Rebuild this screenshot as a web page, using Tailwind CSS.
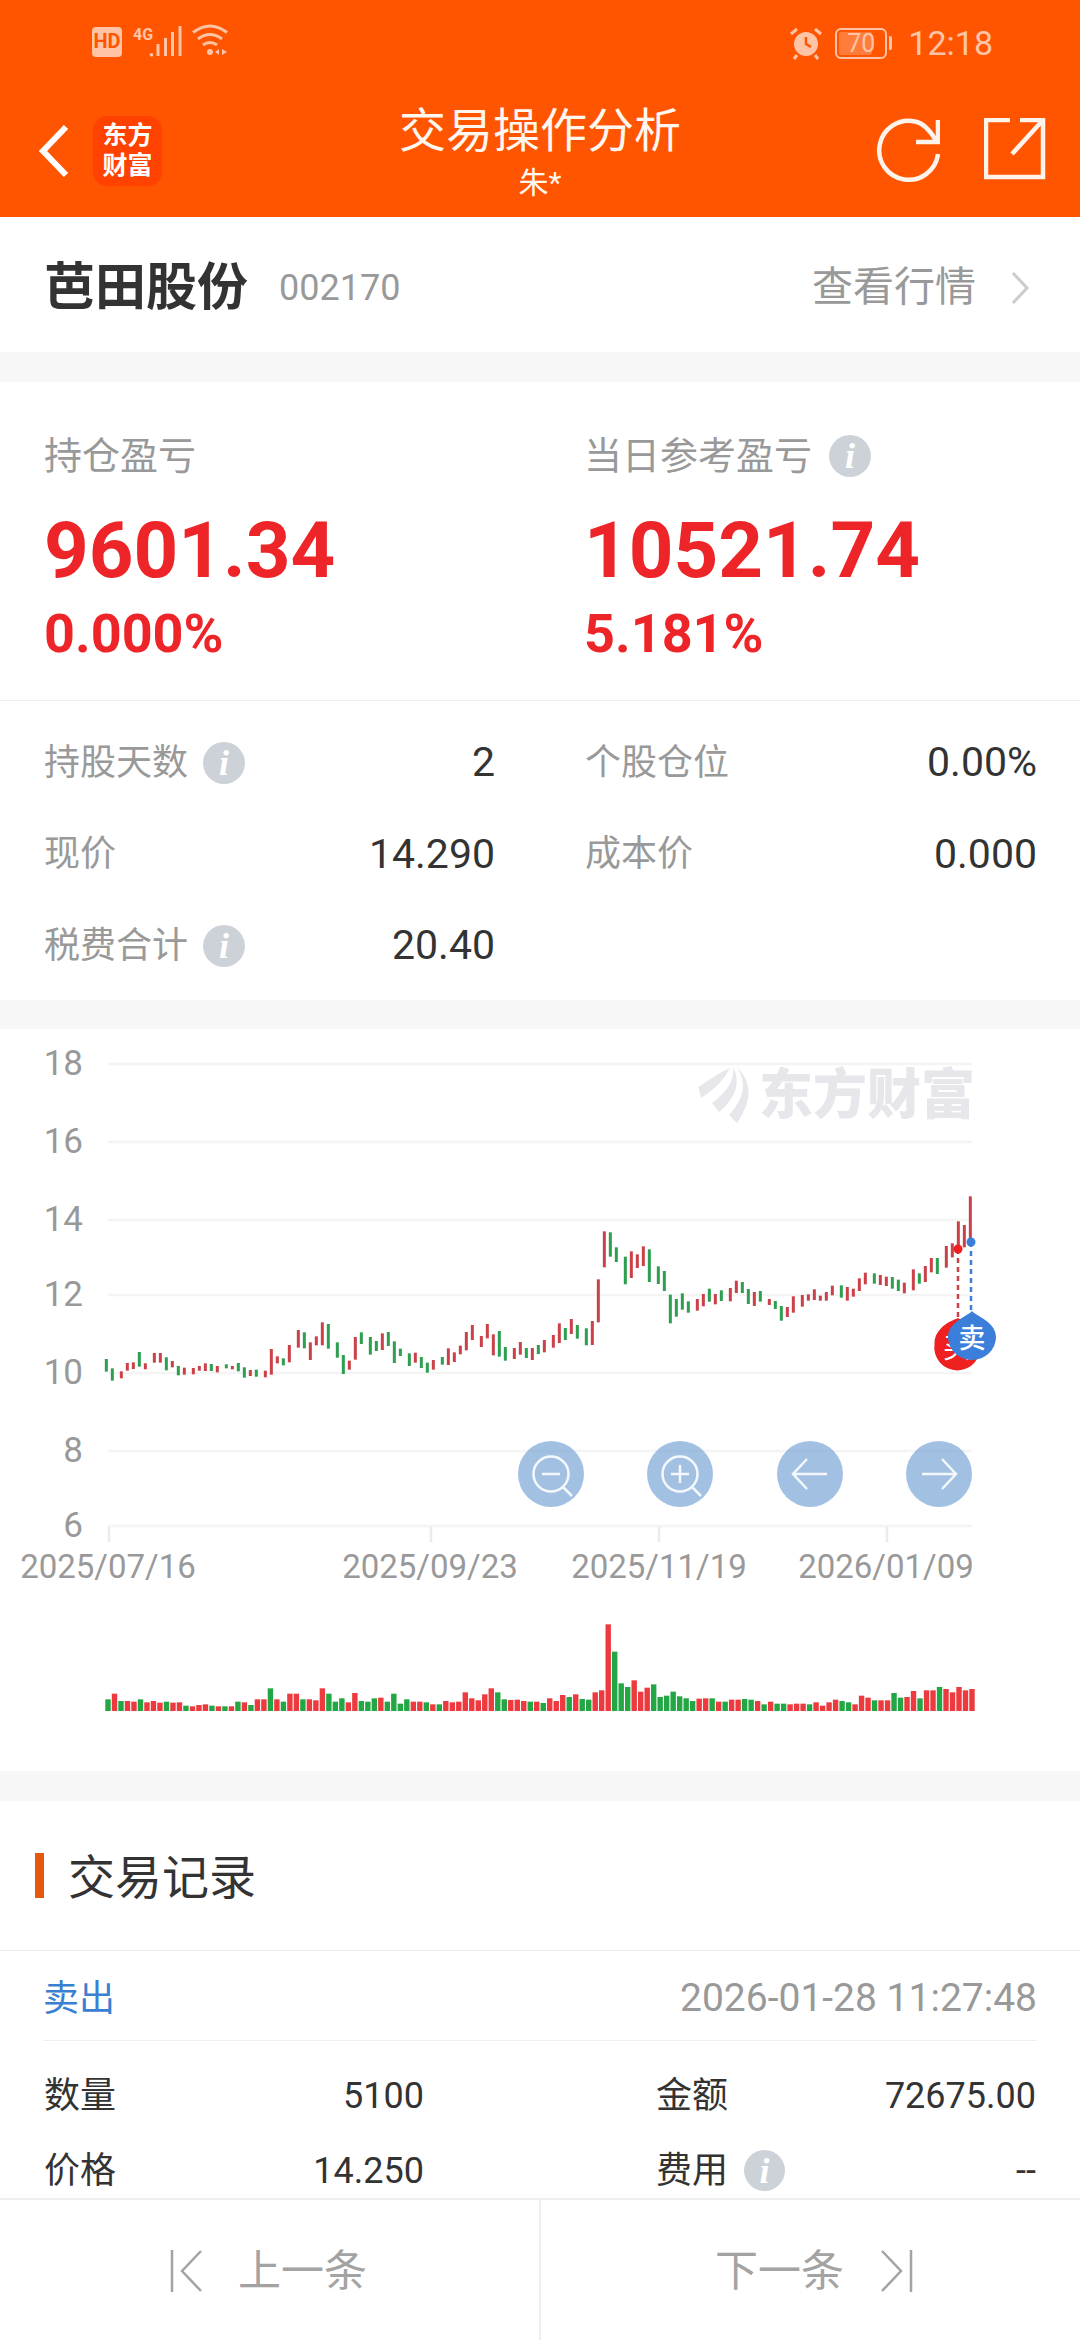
<!DOCTYPE html>
<html lang="zh-CN">
<head>
    <meta charset="UTF-8">
    <meta name="viewport" content="width=device-width, initial-scale=1.0">
    <title>交易操作分析</title>
    <script src="https://cdn.jsdelivr.net/npm/@tailwindcss/browser@4"></script>
</head>
<body class="[font-family:Roboto,'Noto_Sans_CJK_SC',sans-serif]">
<div class="w-[1080px] h-[2340px] flex flex-col overflow-hidden bg-[#f7f7f7] text-[#333]">

    <!-- header -->
    <header class="h-[217px] shrink-0 bg-[#ff5500] flex flex-col">
        <div class="h-[86px] flex items-center justify-between pl-[92px] pr-[87px] text-[#ffc4a6]">
            <svg width="140" height="40" viewBox="92 24 140 40" fill="none">
                <rect x="92" y="28" width="30" height="30" rx="4" fill="#ffc4a6"/>
                <path d="M151.5 54a1.8 1.8 0 1 0 .01 0ZM156.5 45h3v12h-3ZM164 39h3v18h-3ZM171 33h3v24h-3ZM178.500 27h3v30h-3Z" fill="#ffc4a6"/>
                <path d="M193 33.500q17-13 34 0M198 40q12-9 24 0M203 46q7-5 14 0" stroke="#ffc4a6" stroke-width="3"/>
                <circle cx="210" cy="53" r="3" fill="#ffc4a6"/>
                <path d="M219 50v6l-4-3ZM222 50v6l5-3Z" fill="#ffc4a6"/>
                <text x="107" y="49" text-anchor="middle" font-size="20" font-weight="700" fill="#ff5500">HD</text>
                <text x="133" y="41" font-size="16" font-weight="700" fill="#ffc4a6">4G</text>
            </svg>
            <div class="flex items-center">
                <svg width="36" height="36" viewBox="0 0 36 36" fill="none" class="mr-[11px]">
                    <circle cx="18" cy="19" r="12" fill="#ffc4a6"/>
                    <path d="M18 12v7l5 3" stroke="#ff5500" stroke-width="2.500"/>
                    <path d="M3 9l6-5M33 9l-6-5M9 30l-3 4M27 30l3 4" stroke="#ffc4a6" stroke-width="3"/>
                </svg>
                <div class="relative w-[52px] h-[31px] border-[2px] border-[#ffc4a6] rounded-[6px] flex items-center justify-center text-[25px] leading-none overflow-hidden">
                    <div class="absolute left-[2px] top-[2px] bottom-[2px] w-[33px] bg-[#ffc4a6]/35 rounded-[2px]"></div>
                    <span class="relative">70</span>
                </div>
                <div class="w-[3px] h-[14px] ml-[2px] bg-[#ffc4a6] rounded-r-[2px]"></div>
                <span class="ml-[16px] text-[34px] leading-none">12:18</span>
            </div>
        </div>
        <div class="flex-1 grid grid-cols-[1fr_auto_1fr] items-start">
            <div class="flex items-center pl-[38px] pt-[30px]">
                <svg width="34" height="54" viewBox="0 0 34 54" fill="none">
                    <path d="M28 3 5 27l23 24" stroke="#fff" stroke-width="6"/>
                </svg>
                <div class="ml-[21px] w-[69px] h-[70px] rounded-[14px] bg-[#ff4200] flex flex-col items-center justify-center text-white font-bold text-[25px] leading-[30px]">
                    <span>东方</span>
                    <span>财富</span>
                </div>
            </div>
            <div class="flex flex-col items-center text-white">
                <div class="text-[47px] leading-[62px] pt-[14px] text-[#fff7f0]">交易操作分析</div>
                <div class="text-[30px] leading-[36px] mt-[3px] text-[#fff7f0]">朱*</div>
            </div>
            <div class="flex items-start justify-end gap-[44px] pr-[34px] pt-[32px]">
                <svg width="64" height="66" viewBox="876 118 64 66" fill="none" stroke="#fff4ec" stroke-width="4.500">
                    <path d="M938 154a29.500 29.500 0 1 1-23-32.500q11 2 21 19"/>
                    <path d="M938 120v22h-22"/>
                </svg>
                <svg width="62" height="62" viewBox="984 120 62 62" fill="none" stroke="#fff4ec" stroke-width="4.500">
                    <path d="M1010 122h-24v57h57v-57h-23"/>
                    <path d="M1012 156l31-34"/>
                </svg>
            </div>
        </div>
    </header>

    <!-- stock name -->
    <section class="h-[135px] shrink-0 bg-white flex items-center justify-between pl-[44px] pr-[50px] pt-[6px]">
        <div class="flex items-center">
            <span class="text-[51px] font-bold leading-none">芭田股份</span>
            <span class="ml-[31px] text-[36px] leading-none text-[#999]">002170</span>
        </div>
        <div class="flex items-center text-[#999]">
            <span class="text-[41px] leading-none">查看行情</span>
            <svg class="ml-[34px]" width="20" height="34" viewBox="0 0 20 34" fill="none">
                <path d="M3 2l14 15L3 32" stroke="#ccc" stroke-width="3"/>
            </svg>
        </div>
    </section>

    <!-- profit -->
    <section class="mt-[30px] h-[618px] shrink-0 bg-white">
        <div class="h-[319px] grid grid-cols-[540px_1fr] pl-[44px] border-b border-[#eee]">
            <div>
                <div class="mt-[50px] h-[48px] leading-[48px] text-[38px] text-[#999]">持仓盈亏</div>
                <div class="mt-[29px] h-[84px] leading-[84px] text-[78px] font-bold text-[#ee2528]">9601.34</div>
                <div class="mt-[11px] h-[60px] leading-[60px] text-[54px] font-bold text-[#ee2528]">0.000%</div>
            </div>
            <div>
                <div class="mt-[50px] h-[48px] leading-[48px] text-[38px] text-[#999] flex items-center">
                    当日参考盈亏
                    <span class="ml-[17px] w-[42px] h-[42px] rounded-full bg-[#cdd2d9] flex items-center justify-center text-white italic font-bold text-[36px] [font-family:'Liberation_Serif',serif]">i</span>
                </div>
                <div class="mt-[29px] h-[84px] leading-[84px] text-[78px] font-bold text-[#ee2528]">10521.74</div>
                <div class="mt-[11px] h-[60px] leading-[60px] text-[54px] font-bold text-[#ee2528]">5.181%</div>
            </div>
        </div>
        <div class="pt-[16px] pl-[44px] pr-[43px] grid grid-cols-[451px_452px] gap-x-[90px] auto-rows-[91.5px] text-[41px]">
            <div class="flex items-center justify-between">
                <div class="flex items-center text-[36px] text-[#999]">持股天数
                    <span class="ml-[15px] w-[42px] h-[42px] rounded-full bg-[#cdd2d9] flex items-center justify-center text-white italic font-bold text-[36px] [font-family:'Liberation_Serif',serif]">i</span>
                </div>
                <span>2</span>
            </div>
            <div class="flex items-center justify-between">
                <span class="text-[36px] text-[#999]">个股仓位</span>
                <span>0.00%</span>
            </div>
            <div class="flex items-center justify-between">
                <span class="text-[36px] text-[#999]">现价</span>
                <span>14.290</span>
            </div>
            <div class="flex items-center justify-between">
                <span class="text-[36px] text-[#999]">成本价</span>
                <span>0.000</span>
            </div>
            <div class="flex items-center justify-between">
                <div class="flex items-center text-[36px] text-[#999]">税费合计
                    <span class="ml-[15px] w-[42px] h-[42px] rounded-full bg-[#cdd2d9] flex items-center justify-center text-white italic font-bold text-[36px] [font-family:'Liberation_Serif',serif]">i</span>
                </div>
                <span>20.40</span>
            </div>
        </div>
    </section>

    <!-- chart, drawn in page coordinates -->
    <section class="mt-[29px] h-[742px] shrink-0 bg-white">
        <svg id="chart" class="block" width="1080" height="742" viewBox="0 1029 1080 742"></svg>
    </section>

    <!-- trade records -->
    <section class="mt-[30px] flex-1 min-h-0 bg-white overflow-hidden">
        <div class="h-[150px] flex items-center border-b border-[#eee] pl-[35px]">
            <div class="w-[9px] h-[45px] bg-[#e5590f]"></div>
            <span class="ml-[24px] mt-[4px] text-[47px] leading-none">交易记录</span>
        </div>
        <div class="mx-[43px] h-[90px] pt-[6px] flex items-center justify-between border-b border-[#eee]">
            <span class="text-[36px] text-[#3a80d2]">卖出</span>
            <span class="text-[39px] text-[#999]">2026-01-28 11:27:48</span>
        </div>
        <div class="mx-[44px] pt-[17px] grid grid-cols-[380px_380px] justify-between auto-rows-[75px] text-[36px]">
            <div class="flex items-center justify-between"><span>数量</span><span>5100</span></div>
            <div class="flex items-center justify-between"><span>金额</span><span>72675.00</span></div>
            <div class="flex items-center justify-between"><span>价格</span><span>14.250</span></div>
            <div class="flex items-center justify-between">
                <div class="flex items-center">费用
                    <span class="ml-[16px] w-[41px] h-[41px] rounded-full bg-[#cdd2d9] flex items-center justify-center text-white italic font-bold text-[36px] [font-family:'Liberation_Serif',serif]">i</span>
                </div>
                <span>--</span>
            </div>
        </div>
    </section>

    <!-- prev / next -->
    <footer class="h-[142px] shrink-0 bg-white border-t-[2px] border-[#eee] grid grid-cols-[541px_1fr] text-[43px] text-[#a3a3a3]">
        <div class="flex items-center pl-[170px] pt-[2px] border-r-[2px] border-[#eee]">
            <svg width="34" height="44" viewBox="0 0 34 44" fill="none" stroke="#a3a3a3" stroke-width="2.500">
                <path d="M2 1v42M31 2 12 22l19 20"/>
            </svg>
            <span class="ml-[34px] leading-none">上一条</span>
        </div>
        <div class="flex items-center pl-[174px] pt-[2px]">
            <span class="leading-none">下一条</span>
            <svg class="ml-[35px]" width="34" height="44" viewBox="0 0 34 44" fill="none" stroke="#a3a3a3" stroke-width="2.500">
                <path d="M32 1v42M3 2l19 20L3 42"/>
            </svg>
        </div>
    </footer>
</div>

<script>
    const red = '#cb4049', green = '#2e9e4f';

    // candles read off the chart: [x, top, bottom, isGreen], 3x crop units per block
    const candleBlocks = [
        { ox: 100, oy: 1300, bars: [[19,177,215,1],[37,205,242,1],[64,214,235,0],[82,189,212,0],[100,187,207,0],[118,156,200,1],[136,190,208,0],[163,159,188,0],[181,159,188,0],[199,172,211,1],[217,183,202,0],[235,198,226,1],[253,203,224,0],[280,204,223,0],[298,198,212,0],[316,190,213,0],[334,192,213,1],[352,198,217,0],[379,193,205,1],[397,198,208,0],[415,189,214,1],[433,202,233,1],[451,210,228,0],[469,209,230,1],[496,212,232,0],[514,147,224,0],[532,169,190,0],[550,175,196,1],[568,135,187,0],[595,90,143,0],[613,97,145,1],[631,127,180,0],[649,109,136,0],[667,67,136,0],[685,72,146,1],[712,127,173,1]] },
        { ox: 340, oy: 1300, bars: [[10,165,222,1],[28,182,209,0],[46,111,179,0],[64,97,132,1],[91,111,164,1],[109,123,153,1],[127,100,150,0],[145,96,138,1],[163,124,189,1],[181,146,168,1],[208,160,198,1],[226,158,188,0],[244,171,204,1],[262,188,218,1],[280,180,209,0],[307,171,194,1],[325,145,195,0],[343,157,186,0],[361,137,163,0],[379,96,151,0],[397,75,120,0],[424,108,141,0],[442,72,115,0],[460,103,166,0],[478,93,170,1],[496,141,182,1],[523,144,177,0],[541,126,164,0],[559,144,174,1],[577,144,180,0],[595,135,162,1],[613,120,157,0],[640,105,143,0],[658,70,129,0],[676,84,120,1],[694,57,102,0],[712,75,116,1]] },
        { ox: 580, oy: 1220, bars: [[19,325,376,1],[37,303,375,0],[55,178,307,0],[73,34,142,0],[91,37,110,1],[109,82,126,1],[136,110,193,1],[154,94,174,0],[172,103,144,0],[190,79,138,0],[208,88,186,1],[235,139,192,1],[253,153,213,1],[271,224,310,1],[289,237,290,1],[307,220,269,1],[325,244,278,1],[352,237,272,0],[370,222,259,0],[388,206,245,1],[406,222,253,0],[424,211,243,1],[451,204,244,0],[469,182,219,0],[487,186,219,1],[505,207,252,1],[523,216,258,0],[541,213,245,1],[568,237,255,0],[586,243,267,1]] },
        { ox: 780, oy: 1180, bars: [[4,378,422,1],[22,381,411,0],[40,349,398,0],[67,345,380,0],[85,343,362,0],[103,328,360,0],[121,347,362,0],[139,336,362,0],[157,317,346,0],[184,316,353,1],[202,321,362,0],[220,326,350,0],[238,295,333,0],[256,278,313,0],[283,280,311,1],[301,285,315,0],[319,290,318,0],[337,291,326,1],[355,299,333,1],[373,308,340,0],[400,268,331,0],[418,280,311,1],[436,258,306,0],[454,234,277,0],[472,234,282,1],[499,198,263,0],[517,190,232,0],[535,124,210,0],[553,135,202,0],[571,49,180,0]] }
    ];

    // volume heights in 3x crop units, negative is a green bar
    const volumes = [-35,52,-30,30,28,-35,26,30,25,-28,25,26,-16,14,18,20,-16,14,-14,14,-28,26,-18,35,35,-68,35,-28,52,52,-35,35,32,68,-52,-28,-38,26,54,-30,-28,-38,40,-28,-52,-22,-35,28,28,-26,20,-20,30,26,28,56,38,32,50,68,-56,-35,33,34,30,-28,28,
        -24,38,30,48,-42,50,-36,-34,56,62,260,-178,-83,-72,92,58,70,-80,-42,-46,-58,-44,-38,-30,37,38,-38,28,-28,34,34,-36,-34,30,-20,28,-22,-22,20,22,22,-20,26,16,26,34,-30,-26,20,46,40,-32,32,32,-54,-40,42,60,-38,62,62,-72,66,56,72,62,66];

    let svg = '';
    const yLabels = [['18',1064],['16',1142],['14',1220],['12',1295],['10',1373],['8',1451],['6',1526]];
    yLabels.forEach(([t, y]) => {
        svg += `<rect x="108" y="${y - 1.25}" width="864" height="2.5" fill="#f4f4f4"/>`;
        svg += `<text x="83" y="${y + 11}" text-anchor="end" font-size="35" fill="#999">${t}</text>`;
    });

    // watermark
    svg += `<g fill="#e7e7eb">
        <path d="M698.600 1087Q720 1072 730 1068Q722 1085 701 1098Z"/>
        <path d="M733 1067Q736 1085 712 1103L719 1112Q745 1090 733 1067Z"/>
        <path d="M737 1067Q760 1090 737 1123L729 1115Q752 1090 737 1067Z"/>
        <text x="759" y="1114" font-size="54" font-weight="900">东方财富</text></g>`;

    // x axis
    [[109,'2025/07/16',108],[431,'2025/09/23',430],[659,'2025/11/19',659],[887,'2026/01/09',886]].forEach(([x, t, c]) => {
        svg += `<rect x="${x - 1.25}" y="1527" width="2.5" height="15" fill="#ececec"/>`;
        svg += `<text x="${c}" y="1578" text-anchor="middle" font-size="33" fill="#999">${t}</text>`;
    });

    candleBlocks.forEach(b => b.bars.forEach(([x, t, e, g]) => {
        svg += `<rect x="${b.ox + x / 3 - 1.5}" y="${b.oy + t / 3}" width="3" height="${(e - t) / 3}" fill="${g ? green : red}"/>`;
    }));

    // volume
    const pitch = (972 - 108) / (volumes.length - 1);
    volumes.forEach((v, i) => {
        const h = Math.abs(v) / 3;
        svg += `<rect x="${108 + i * pitch - 2.7}" y="${1711 - h}" width="5.4" height="${h}" fill="${v < 0 ? '#23a644' : '#ec3a3f'}"/>`;
    });

    // zoom and pan buttons
    [551, 680, 810, 939].forEach(x => {
        svg += `<circle cx="${x}" cy="1474" r="33" fill="#7ba5d6" fill-opacity="0.7"/>`;
    });
    svg += `<g fill="none" stroke="#f4f8fc" stroke-width="2.500">
        <circle cx="551" cy="1474" r="17.500"/><path d="M542 1474h18M563 1487l9 9"/>
        <circle cx="680" cy="1474" r="17.500"/><path d="M671 1474h18M680 1465v18M692 1487l9 9"/>
        <path d="M793 1474h34M807 1459l-14 15 14 15"/>
        <path d="M922 1474h34M942 1459l14 15-14 15"/></g>`;

    // buy and sell markers
    svg += `<path d="M958 1249V1322" stroke="#cb4049" stroke-width="2.500" stroke-dasharray="5 4"/>
        <path d="M971 1242V1312" stroke="#3b7fdb" stroke-width="2.500" stroke-dasharray="5 4"/>
        <circle cx="958" cy="1249" r="4.500" fill="#ee2020"/>
        <circle cx="971" cy="1242" r="4.500" fill="#3b7fdb"/>
        <path d="M958 1318C961 1320 980 1326 980 1344A23 23 0 1 1 934.500 1344C934.500 1326 954 1320 958 1318Z" fill="#ee2020"/>
        <text x="957" y="1358" text-anchor="middle" font-size="28" fill="#fff">买</text>
        <path d="M972 1311C976 1316 996 1322 996 1337A24 23 0 1 1 948 1337C948 1322 968 1316 972 1311Z" fill="#3b7fdb"/>
        <text x="972" y="1348" text-anchor="middle" font-size="27" font-weight="500" fill="#fff">卖</text>`;

    document.getElementById('chart').innerHTML = svg;
</script>
</body>
</html>
